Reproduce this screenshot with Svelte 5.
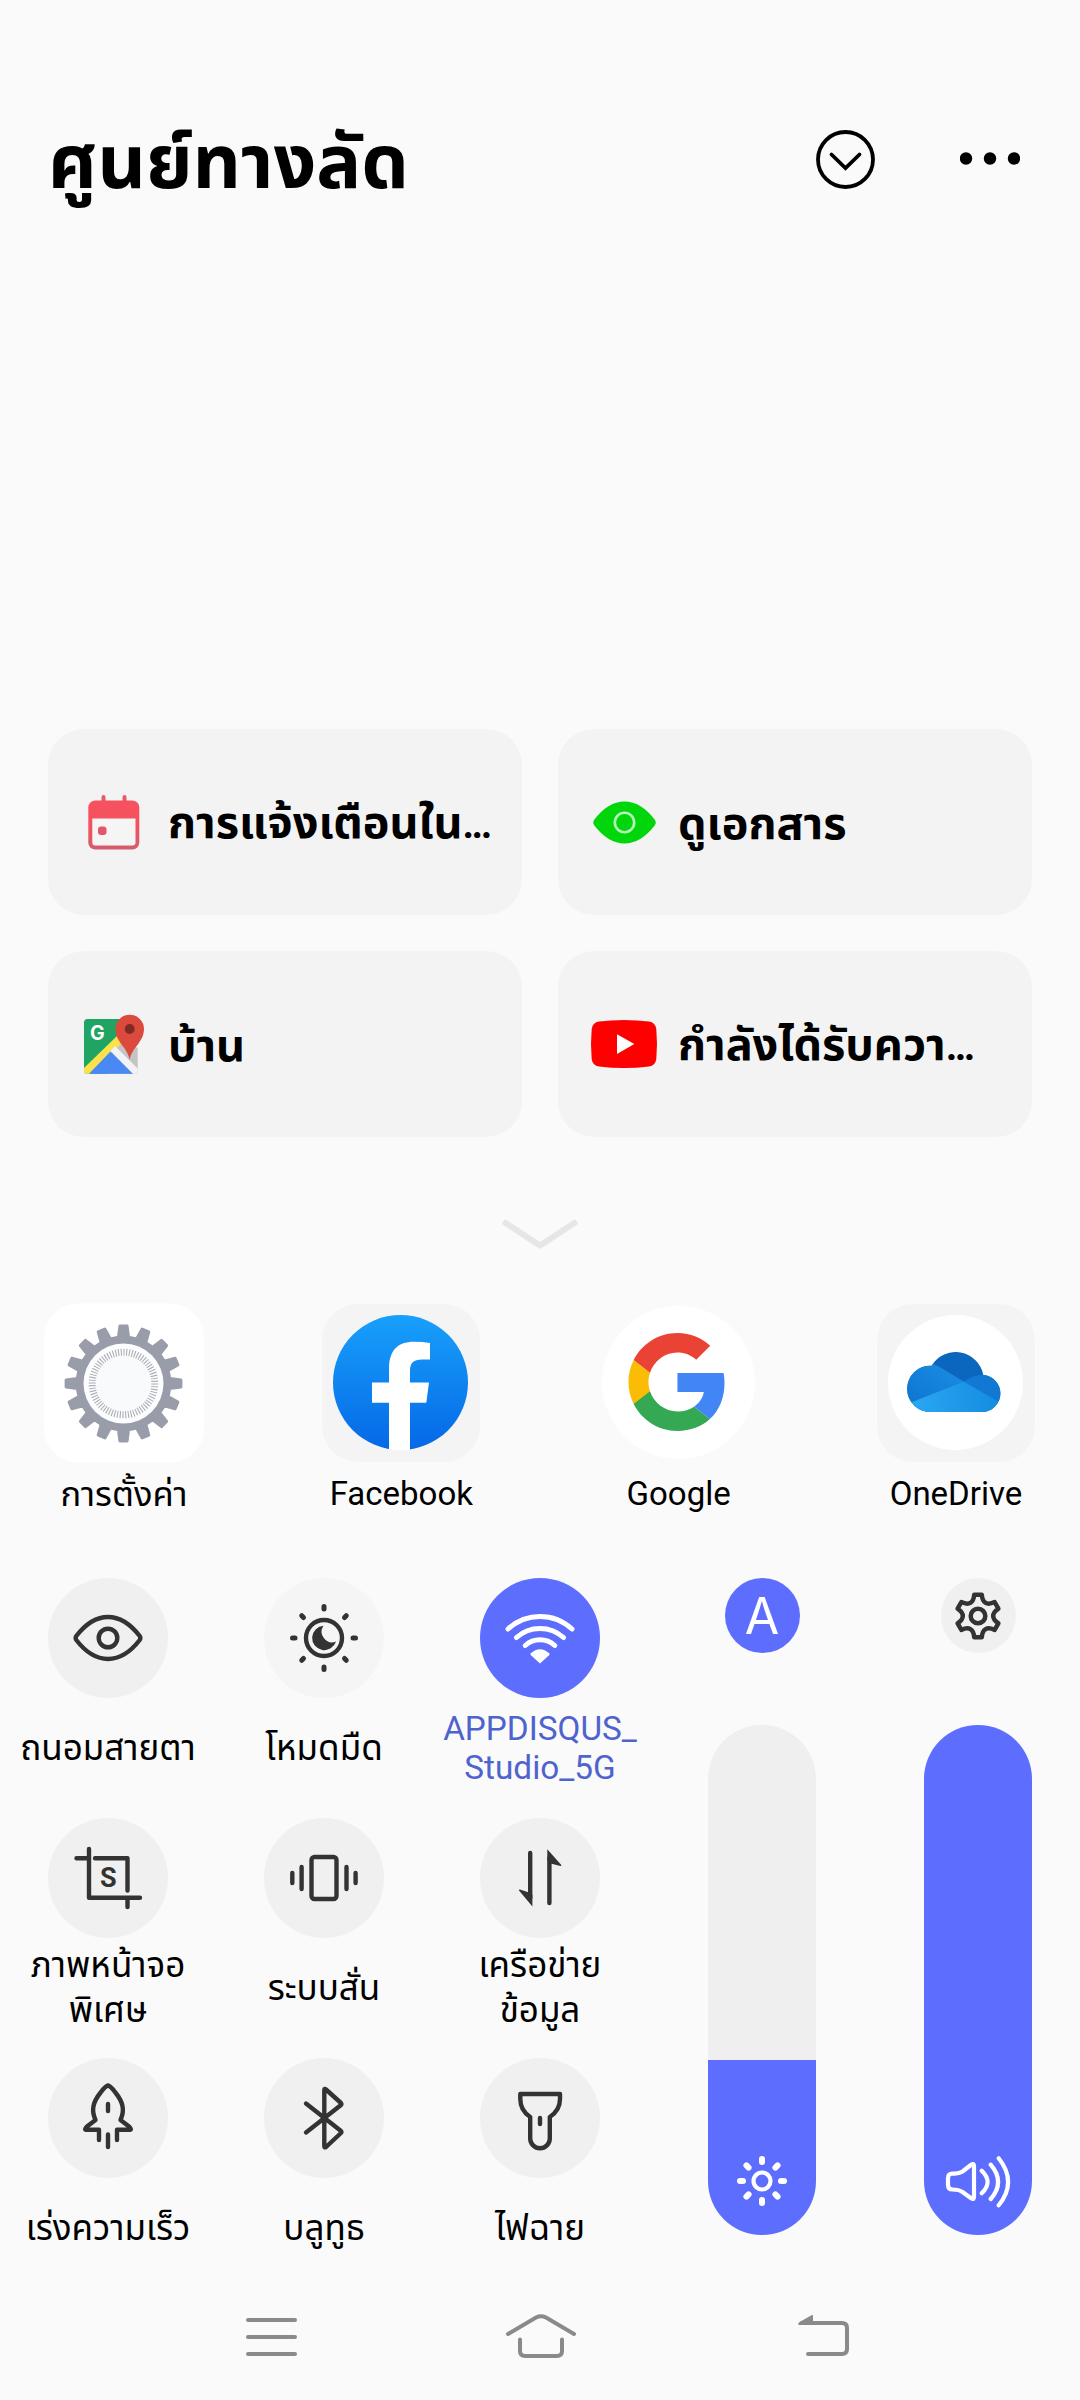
<script>
	const cards = [
		{ icon: 'calendar', label: 'การแจ้งเตือนใน', cut: true },
		{ icon: 'view', label: 'ดูเอกสาร' },
		{ icon: 'maps', label: 'บ้าน' },
		{ icon: 'youtube', label: 'กำลังได้รับควา', cut: true }
	];

	const apps = [
		{ icon: 'settings', label: 'การตั้งค่า', thai: true },
		{ icon: 'facebook', label: 'Facebook' },
		{ icon: 'google', label: 'Google' },
		{ icon: 'onedrive', label: 'OneDrive' }
	];

	const toggles = [
		{ icon: 'eye', lines: ['ถนอมสายตา'] },
		{ icon: 'dark', lines: ['โหมดมืด'], faint: true },
		{ icon: 'wifi', lines: ['APPDISQUS_', 'Studio_5G'], active: true },
		{ icon: 'capture', lines: ['ภาพหน้าจอ', 'พิเศษ'] },
		{ icon: 'vibrate', lines: ['ระบบสั่น'] },
		{ icon: 'data', lines: ['เครือข่าย', 'ข้อมูล'] },
		{ icon: 'rocket', lines: ['เร่งความเร็ว'] },
		{ icon: 'bluetooth', lines: ['บลูทูธ'] },
		{ icon: 'torch', lines: ['ไฟฉาย'] }
	];

	const brightness = 175 / 510 * 100;
	const volume = 100;

	const rays = [0, 45, 90, 135, 180, 225, 270, 315];

	function polar(cx, cy, r, deg) {
		const a = (deg - 90) * Math.PI / 180;
		return `${(cx + r * Math.cos(a)).toFixed(2)} ${(cy + r * Math.sin(a)).toFixed(2)}`;
	}

	// cog outline: flat tooth tops joined by curved valleys
	function cog(cx, cy, teeth, outer, root, tip, base) {
		const step = 360 / teeth;
		let d = `M${polar(cx, cy, outer, -tip)}`;
		for (let i = 0; i < teeth; i++) {
			const a = i * step;
			d += `L${polar(cx, cy, outer, a + tip)}`;
			d += `C${polar(cx, cy, root, a + base)} ${polar(cx, cy, root, a + step - base)} ${polar(cx, cy, outer, a + step - tip)}`;
		}
		return d + 'Z';
	}

	function gear(cx, cy, teeth, outer, root, tip, base) {
		const step = 360 / teeth;
		let d = '';
		for (let i = 0; i < teeth; i++) {
			const a = i * step;
			d += `${i ? 'L' : 'M'}${polar(cx, cy, root, a - base)}L${polar(cx, cy, outer, a - tip)}`;
			d += `L${polar(cx, cy, outer, a + tip)}L${polar(cx, cy, root, a + base)}`;
		}
		return d + 'Z';
	}
</script>

<div class="screen">
	<header>
		<h1>ศูนย์ทางลัด</h1>
		<div class="actions">
			<svg width="60" height="60" viewBox="0 0 60 60" class="line">
				<circle cx="30.500" cy="29.500" r="27.500" />
				<path d="M16.500 24.500L30.500 38L44.500 24.500" />
			</svg>
			<svg width="60" height="60" viewBox="0 0 60 60">
				<circle cx="6" cy="28.500" r="6.200" />
				<circle cx="30" cy="28.500" r="6.200" />
				<circle cx="54" cy="28.500" r="6.200" />
			</svg>
		</div>
	</header>

	<section class="cards">
		{#each cards as card}
			<div class="card">
				<svg width="72" height="72" viewBox="0 0 72 72">
					{#if card.icon === 'calendar'}
						<defs>
							<linearGradient id="cal" x1="0" y1="0" x2="0" y2="1">
								<stop offset="0.5" stop-color="#f5515f" />
								<stop offset="1" stop-color="#d35d6c" />
							</linearGradient>
						</defs>
						<path d="M25.500 11V17M46.500 11V17" stroke="#e85a67" stroke-width="4" stroke-linecap="round" />
						<rect x="10.300" y="14.500" width="51" height="49" rx="7" fill="url(#cal)" />
						<path d="M14.300 32.500H57.500V56.500Q57.500 59.500 54.500 59.500H17.300Q14.300 59.500 14.300 56.500Z" fill="#f5f5f5" />
						<rect x="20" y="40.500" width="8.500" height="8.500" rx="3" fill="#e4576a" />
					{:else if card.icon === 'view'}
						<path d="M6 34Q20 15.500 36.500 15.500T67 34Q68.500 36.500 67 39Q53 57.500 36.500 57.500T6 39Q4.500 36.500 6 34Z" fill="#00d60b" />
						<circle cx="36.500" cy="36.500" r="9.700" fill="none" stroke="#b5f7b8" stroke-width="2.600" />
					{:else if card.icon === 'maps'}
						<path d="M9.500 11H56V65.700H9.500Q6 65.700 6 62.200V14.500Q6 11 9.500 11Z" fill="#1fa463" />
						<path d="M33 43L45 31L59.700 40V65.700H30Z" fill="#c4c4c4" />
						<path d="M6 60L40 27L44 35L12 65.700H8Q6 65.700 6 62Z" fill="#fbe14b" />
						<path d="M32.500 43L37 38L59.700 60.500V65.700H55Z" fill="#f1f3f7" />
						<path d="M11 65.700L32.500 43.500L54.700 65.700Z" fill="#4a89f3" />
						<path d="M51.700 52C50 40 37.400 34 37.400 21A14.300 14.300 0 0 1 66 21C66 34 53.400 40 51.700 52Z" fill="#dc4a3d" />
						<circle cx="51.700" cy="21" r="4.900" fill="#7f2a22" />
						<text x="19.300" y="31.800" text-anchor="middle" class="maps-g">G</text>
					{:else}
						<path d="M11 13.500Q36 10.500 61 13.500Q67.500 14.500 68.300 21Q69.700 36 68.300 51Q67.500 57.500 61 58.500Q36 61.500 11 58.500Q4.500 57.500 3.700 51Q2.300 36 3.700 21Q4.500 14.500 11 13.500Z" fill="#fe0000" />
						<path d="M29 26.300V46L46.300 36Z" fill="#fff" />
					{/if}
				</svg>
				<span class="card-label">{card.label}{#if card.cut}<span class="dots">...</span>{/if}</span>
			</div>
		{/each}
	</section>

	<svg class="collapse" width="80" height="36" viewBox="0 0 80 36">
		<path d="M5.500 6L40 28.500L74.500 6" />
	</svg>

	<section class="apps">
		{#each apps as app}
			<div class="app">
				<svg width="160" height="160" viewBox="0 0 160 160">
					{#if app.icon === 'settings'}
						<rect x="0" y="0.500" width="160" height="159" rx="34" fill="#fff" />
						<path d={gear(79.5, 80.5, 16, 57.5, 46.5, 3.6, 6.2)} fill="#999ca9" stroke="#999ca9" stroke-width="3" stroke-linejoin="round" />
						<circle cx="79.500" cy="80.500" r="40" fill="#fcfdff" />
						<circle cx="79.500" cy="80.500" r="31.300" fill="#f8fafc" stroke="#a9abb2" stroke-width="7" pathLength="288" stroke-dasharray="1.500 2.500" />
					{:else if app.icon === 'facebook'}
						<defs>
							<linearGradient id="fb" x1="0" y1="0" x2="0" y2="1">
								<stop offset="0" stop-color="#18a0fb" />
								<stop offset="1" stop-color="#0568e6" />
							</linearGradient>
							<clipPath id="fb-clip"><circle cx="79.500" cy="80" r="67.500" /></clipPath>
						</defs>
						<rect x="1" y="1" width="158" height="158" rx="36" fill="#f4f4f5" />
						<circle cx="79.500" cy="79.500" r="67.500" fill="url(#fb)" />
						<path clip-path="url(#fb-clip)" fill="#fff" d="M68 150V99.800H51V79.500H68V66C68 47 77 38.800 93 38.800Q101 38.800 109 40V56.500H101C92.500 56.500 89 60 89 68V79.500H108L105.300 99.800H89V150Z" />
					{:else if app.icon === 'google'}
						<circle cx="79.500" cy="79.500" r="76.500" fill="#fff" />
						<g transform="translate(25 25.500) scale(4.4545)">
							<path fill="#34a853" d="M12 23c2.970 0 5.460-.98 7.280-2.660l-3.570-2.770c-.98.66-2.230 1.060-3.710 1.060-2.860 0-5.290-1.930-6.160-4.530H2.180v2.840C3.990 20.530 7.700 23 12 23z" />
							<path fill="#4285f4" d="M22.560 12.250c0-.78-.07-1.530-.2-2.250H12v4.260h5.920c-.26 1.370-1.040 2.530-2.210 3.310l3.570 2.770c2.080-1.920 3.280-4.740 3.280-8.090z" />
							<path fill="#fbbc05" d="M5.840 14.090c-.22-.66-.35-1.360-.35-2.090s.13-1.430.35-2.090L2.180 7.070C1.430 8.550 1 10.220 1 12s.43 3.450 1.180 4.930l2.850-2.220.81-.62z" />
							<path fill="#ea4335" d="M12 5.380c1.620 0 3.060.56 4.210 1.640l3.150-3.150C17.450 2.090 14.970 1 12 1 7.700 1 3.990 3.470 2.180 7.070l3.660 2.840c.87-2.600 3.300-4.530 6.160-4.530z" />
						</g>
					{:else}
						<defs>
							<clipPath id="cloud">
								<path d="M56 109A23.200 23.200 0 1 1 55.700 62.700A28 28 0 0 1 107.300 71.900A18.600 18.600 0 0 1 107 109Z" />
							</clipPath>
							<linearGradient id="od-left" x1="0" y1="1" x2="1" y2="0">
								<stop offset="0" stop-color="#0f74d0" />
								<stop offset="1" stop-color="#1b8fe4" />
							</linearGradient>
							<linearGradient id="od-base" x1="0" y1="0" x2="1" y2="0">
								<stop offset="0" stop-color="#2ba9f2" />
								<stop offset="1" stop-color="#128ae0" />
							</linearGradient>
						</defs>
						<rect x="1" y="1" width="158" height="158" rx="36" fill="#f4f4f5" />
						<circle cx="79.500" cy="79.500" r="67.500" fill="#fff" />
						<g clip-path="url(#cloud)">
							<rect x="30" y="45" width="100" height="70" fill="#0a67bd" />
							<path d="M30 60H54Q62 62.500 67 66L87.700 78.500L30 101.500Z" fill="url(#od-left)" />
							<path d="M87.700 78.500Q98 72 107 71.500H130V103Z" fill="#1179d3" />
							<path d="M30 101.500L87.700 78.500L130 103V115H30Z" fill="url(#od-base)" />
						</g>
					{/if}
				</svg>
				<span class="label" class:thai={app.thai}>{app.label}</span>
			</div>
		{/each}
	</section>

	<section class="controls">
		<div class="toggles">
			{#each toggles as toggle}
				<div class="toggle" class:active={toggle.active} class:faint={toggle.faint}>
					<svg width="120" height="120" viewBox="0 0 120 120" class="disc">
						{#if toggle.icon === 'eye'}
							<path d="M28.300 58Q43 39 60 39T91.700 58Q93 60 91.700 62Q77 81 60 81T28.300 62Q27 60 28.300 58Z" />
							<circle cx="60" cy="60" r="9.300" />
						{:else if toggle.icon === 'dark'}
							<circle cx="60" cy="60" r="18" />
							<path class="solid" d="M59.500 47.800A12.200 12.200 0 1 0 72 63.500A10.500 10.500 0 0 1 59.500 47.800Z" />
							{#each rays as angle}
								<path d="M60 28.500V31" stroke-width="5" transform="rotate({angle} 60 60)" />
							{/each}
						{:else if toggle.icon === 'wifi'}
							<path d="M28 51A47 47 0 0 1 92 51M36.500 59.500A35 35 0 0 1 83.500 59.500M45.300 67.500A22 22 0 0 1 74.700 67.500" stroke-width="5" />
							<path class="solid" d="M50.500 75.500Q60 67 69.500 75.500Q70 76.300 69 77.300L60 85.500L51 77.300Q50 76.300 50.500 75.500Z" />
						{:else if toggle.icon === 'capture'}
							<path d="M28.500 40.300H39M41 31V79.700H92M47 40.300H79.500V72.500M79.500 80V89" />
							<text x="60.200" y="69" text-anchor="middle" class="capture-s">S</text>
						{:else if toggle.icon === 'vibrate'}
							<rect x="47.500" y="39" width="25" height="42" rx="3" />
							<path d="M37.600 49V71M28.300 55V65M82.500 49V71M91.600 55V65" />
						{:else if toggle.icon === 'data'}
							<path d="M50.200 35V80M69.400 40V85" />
							<path class="solid" d="M52.400 77V88.500L38.800 72.200Q39 71.300 40 71.500L49 74.500ZM67.300 42V31.300L81.300 47Q81.500 48 80.500 48L70.500 45.500Z" />
						{:else if toggle.icon === 'rocket'}
							<path d="M60 27.500Q57.500 28 53 34C44 45 43.500 53 47.500 62L39 68.500Q36.500 71.500 37.500 71.700H51V82M60 27.500Q62.500 28 67 34C76 45 76.500 53 72.500 62L81 68.500Q83.500 71.500 82.500 71.700H69V82" />
							<path d="M60 46V53M60 76.500V89" />
						{:else if toggle.icon === 'bluetooth'}
							<path d="M42 45.500L77 73Q77.800 74 77 75L62 89Q60.300 90 60.300 88V32Q60.300 30 62 31.500L77 45Q77.800 46 77 47L42 74.500" />
						{:else}
							<path d="M40.300 36H80V41C80 50 75 55.500 69.800 59V80.500A9.800 9.800 0 0 1 50.200 80.500V59C45 55.500 40.300 50 40.300 41Z" />
							<path d="M60 60V66" />
						{/if}
					</svg>
					<div class="toggle-label">
						{#each toggle.lines as line}
							<span>{line}</span>
						{/each}
					</div>
				</div>
			{/each}
		</div>

		<div class="slider-group">
			<div class="round active">A</div>
			<div class="slider">
				<div class="fill" style="height: {brightness}%"></div>
				<svg width="72" height="72" viewBox="0 0 72 72">
					<circle cx="36" cy="36" r="8.500" />
					{#each rays as angle}
						<path d="M36 14V17" stroke-width="6" transform="rotate({angle} 36 36)" />
					{/each}
				</svg>
			</div>
		</div>

		<div class="slider-group">
			<div class="round">
				<svg width="74" height="74" viewBox="0 0 74 74">
					<path d={cog(37, 37, 6, 21.7, 13.7, 10, 19)} />
					<circle cx="37" cy="37" r="7.300" />
				</svg>
			</div>
			<div class="slider">
				<div class="fill" style="height: {volume}%"></div>
				<svg width="72" height="72" viewBox="0 0 72 72">
					<path d="M6 33Q6 28.500 10.500 28.500Q17 29 20.500 26.500L29.500 19.500Q32 18 32 21V52Q32 55 29.500 53.500L20.500 47Q17 44.500 10.500 44.500Q6 44.500 6 40Z" />
					<path d="M39.700 25.700Q51.500 37 39.700 48.300M48.700 19.700Q63.500 37 48.700 54M56.700 13.300Q75.500 37 56.700 60.300" />
				</svg>
			</div>
		</div>
	</section>

	<nav>
		<svg width="80" height="60" viewBox="0 0 80 60">
			<path d="M18 13H65M18 30H65M18 47H65" />
		</svg>
		<svg width="80" height="60" viewBox="0 0 80 60">
			<path d="M7 27L35 10.500Q40 8 45 10.500L73 27M19 32.500V44Q19 49 24 49H56Q61 49 61 44V32.500" />
		</svg>
		<svg width="80" height="60" viewBox="0 0 80 60">
			<path d="M24 47H58Q63 47 63 42V21Q63 16 58 16H18" />
			<path class="head" d="M29 8V18H14.500Q13.500 16.500 15.500 15L27.500 8.300Z" />
		</svg>
	</nav>
</div>

<style>
	:global(body) {
		background: #fafafa;
	}

	.screen {
		width: 1080px;
		height: 2400px;
		background: #fafafa;
		color: #000;
		font-family: Roboto, 'Noto Sans Thai', 'Noto Sans', sans-serif;
		display: flex;
		flex-direction: column;
		overflow: hidden;
	}

	svg {
		display: block;
		flex: none;
	}

	header {
		height: 320px;
		padding: 0 60px 0 48px;
		display: flex;
		justify-content: space-between;
		align-items: center;
	}

	h1 {
		margin: 0;
		padding-top: 4px;
		font-size: 75px;
		font-weight: 700;
		line-height: 100px;
		white-space: nowrap;
	}

	.actions {
		display: flex;
		gap: 85px;
	}

	.line {
		fill: none;
		stroke: #000;
		stroke-width: 3.8;
		stroke-linecap: round;
	}

	.cards {
		margin: 409px 48px 0;
		display: grid;
		grid-template-columns: 1fr 1fr;
		grid-auto-rows: 186px;
		gap: 36px;
	}

	.card {
		display: flex;
		align-items: center;
		gap: 18px;
		padding: 0 30px;
		background: #f3f3f3;
		border-radius: 36px;
		white-space: nowrap;
	}

	.card-label {
		padding-top: 3px;
		font-size: 45px;
		line-height: 60px;
		font-weight: 700;
	}

	.dots {
		font-size: 40px;
		letter-spacing: -2.5px;
	}

	.maps-g {
		fill: #fff;
		font-family: Inter, sans-serif;
		font-size: 19.5px;
		font-weight: 700;
	}

	.collapse {
		margin: 80px auto 0;
		fill: none;
		stroke: #e6e6e6;
		stroke-width: 6;
		stroke-linecap: round;
		stroke-linejoin: round;
	}

	.apps {
		margin: 50px 44px 0;
		display: flex;
		justify-content: space-between;
	}

	.app {
		width: 160px;
		display: flex;
		flex-direction: column;
		align-items: center;
	}

	.label {
		height: 60px;
		line-height: 62px;
		font-size: 33px;
		white-space: nowrap;
	}

	.label.thai {
		font-size: 34.5px;
	}

	.controls {
		margin-top: 55px;
		display: flex;
	}

	.toggles {
		width: 648px;
		display: grid;
		grid-template-columns: repeat(3, 216px);
		grid-auto-rows: 240px;
	}

	.toggle {
		display: flex;
		flex-direction: column;
		align-items: center;
	}

	.disc {
		border-radius: 50%;
		background: #f0f0f0;
		fill: none;
		stroke: #333;
		stroke-width: 4.4;
		stroke-linecap: round;
		stroke-linejoin: round;
	}

	.faint .disc {
		background: #f5f5f5;
	}

	.active .disc {
		background: #5d6eff;
		stroke: #fff;
	}

	.solid {
		fill: #333;
		stroke: none;
	}

	.active .solid {
		fill: #fff;
	}

	.capture-s {
		fill: #333;
		stroke: none;
		font-size: 27px;
		font-weight: 700;
	}

	.toggle-label {
		height: 100px;
		display: flex;
		flex-direction: column;
		align-items: center;
		justify-content: center;
		font-size: 35px;
		line-height: 45px;
		white-space: nowrap;
	}

	.active .toggle-label {
		color: #4f63cf;
		font-size: 33.3px;
		line-height: 39px;
	}

	.slider-group {
		width: 108px;
		margin-left: 60px;
		display: flex;
		flex-direction: column;
		align-items: center;
	}

	.slider-group + .slider-group {
		margin-left: 108px;
	}

	.round {
		width: 75px;
		height: 75px;
		margin-bottom: 72px;
		border-radius: 50%;
		background: #f0f0f0;
		display: flex;
		align-items: center;
		justify-content: center;
	}

	.round.active {
		background: #5d6eff;
		color: #fff;
		font-family: Inter, sans-serif;
		font-size: 50px;
		line-height: 72px;
	}

	.round svg {
		fill: none;
		stroke: #333;
		stroke-width: 4.5;
		stroke-linejoin: round;
	}

	.slider {
		position: relative;
		width: 108px;
		height: 510px;
		border-radius: 54px;
		background: #efefef;
		overflow: hidden;
		display: flex;
		flex-direction: column;
		justify-content: flex-end;
	}

	.fill {
		background: #5d6eff;
	}

	.slider svg {
		position: absolute;
		left: 18px;
		bottom: 18px;
		fill: none;
		stroke: #fff;
		stroke-width: 4.2;
		stroke-linecap: round;
		stroke-linejoin: round;
	}

	nav {
		margin-top: 9px;
		padding: 0 216px 0 230px;
		display: grid;
		grid-template-columns: 271px 283px 80px;
	}

	nav svg {
		fill: none;
		stroke: #8a8a8a;
		stroke-width: 4;
		stroke-linecap: round;
	}

	nav .head {
		fill: #8a8a8a;
		stroke: none;
	}
</style>
